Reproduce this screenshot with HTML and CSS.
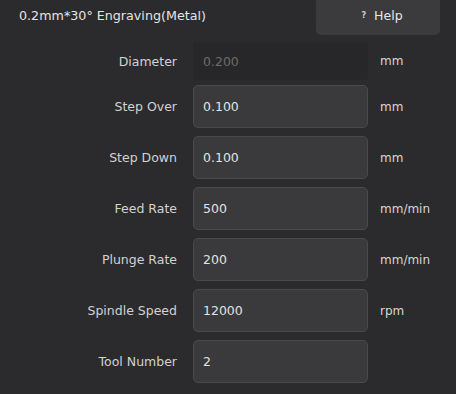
FILE: index.html
```html
<!DOCTYPE html>
<html>
<head>
<meta charset="utf-8">
<link rel="stylesheet" href="styles.css">
</head>
<body>
<div class="panel">
  <div class="header">
    <div class="title">0.2mm*30° Engraving(Metal)</div>
    <button class="help"><span class="q">?</span><span>Help</span></button>
  </div>
  <div class="form">
    <div class="row row-disabled">
      <label class="label">Diameter</label>
      <div class="field disabled">0.200</div>
      <span class="unit">mm</span>
    </div>
    <div class="row">
      <label class="label">Step Over</label>
      <div class="field">0.100</div>
      <span class="unit">mm</span>
    </div>
    <div class="row">
      <label class="label">Step Down</label>
      <div class="field">0.100</div>
      <span class="unit">mm</span>
    </div>
    <div class="row">
      <label class="label">Feed Rate</label>
      <div class="field">500</div>
      <span class="unit">mm/min</span>
    </div>
    <div class="row">
      <label class="label">Plunge Rate</label>
      <div class="field">200</div>
      <span class="unit">mm/min</span>
    </div>
    <div class="row">
      <label class="label">Spindle Speed</label>
      <div class="field">12000</div>
      <span class="unit">rpm</span>
    </div>
    <div class="row">
      <label class="label">Tool Number</label>
      <div class="field">2</div>
      <span class="unit"></span>
    </div>
  </div>
</div>
</body>
</html>
```
FILE: styles.css
```css
html, body {
  margin: 0;
  padding: 0;
  background: #2b2b2e;
}
body {
  width: 456px;
  height: 394px;
  overflow: hidden;
  font-family: "DejaVu Sans", Tahoma, sans-serif;
  font-size: 12.5px;
  color: #d6d6d6;
}
.panel {
  display: flex;
  flex-direction: column;
}
.header {
  display: flex;
  align-items: stretch;
  height: 35px;
}
.title {
  flex: 1;
  padding-left: 19px;
  padding-top: 8px;
  color: #e4e4e4;
  font-size: 12.7px;
}
.help {
  width: 124px;
  margin-right: 16px;
  border: none;
  background: #3b3b3e;
  border-radius: 0 0 5px 5px;
  color: #e6e6e6;
  font-family: inherit;
  font-size: 12.5px;
  display: flex;
  align-items: center;
  justify-content: center;
  gap: 8px;
  padding: 0 0 4px 8px;
}
.help .q {
  font-size: 8px;
  font-weight: bold;
  color: #cfcfcf;
}
.form {
  display: flex;
  flex-direction: column;
  gap: 8px;
  margin-top: 7px;
}
.row {
  display: grid;
  grid-template-columns: 177px 175px 1fr;
  align-items: center;
  height: 43px;
}
.row-disabled {
  height: 38px;
  margin-bottom: -3px;
}
.label {
  text-align: right;
  color: #d2d2d2;
}
.field {
  grid-column: 2;
  margin-left: 16px;
  width: 175px;
  box-sizing: border-box;
  height: 43px;
  border: 1px solid #4a4a4d;
  border-radius: 5px;
  background: #3a3a3c;
  display: flex;
  align-items: center;
  padding-left: 9px;
  color: #e2e2e2;
}
.field.disabled {
  height: 38px;
  border-color: #28282a;
  background: #272729;
  color: #6c6c6c;
  border-radius: 2px;
}
.unit {
  padding-left: 28px;
  color: #d6d6d6;
  font-size: 12px;
}
```
